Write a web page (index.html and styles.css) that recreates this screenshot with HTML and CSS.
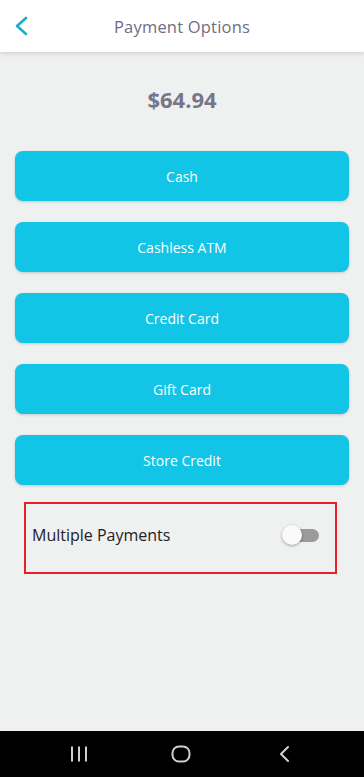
FILE: index.html
```html
<!DOCTYPE html>
<html>
<head>
<meta charset="utf-8">
<link rel="stylesheet" href="styles.css">
</head>
<body>
<div class="screen">
  <header class="topbar">
    <span class="back">
      <svg width="14" height="20" viewBox="0 0 14 20"><path d="M12 2 L3 10 L12 18" fill="none" stroke="#1aafc9" stroke-width="2.6" stroke-linecap="round" stroke-linejoin="round"/></svg>
    </span>
    <h1 class="title">Payment Options</h1>
  </header>
  <main class="content">
    <div class="amount">$64.94</div>
    <div class="options">
      <button class="opt">Cash</button>
      <button class="opt">Cashless ATM</button>
      <button class="opt">Credit Card</button>
      <button class="opt">Gift Card</button>
      <button class="opt">Store Credit</button>
    </div>
    <div class="multi">
      <span class="multi-label">Multiple Payments</span>
      <span class="toggle"><span class="track"></span><span class="thumb"></span></span>
    </div>
  </main>
  <nav class="navbar">
    <svg width="18" height="16" viewBox="0 0 18 16"><g fill="#d0d0d0"><rect x="1" y="0.5" width="2" height="15"/><rect x="8" y="0.5" width="2" height="15"/><rect x="15" y="0.5" width="2" height="15"/></g></svg>
    <svg width="20" height="18" viewBox="0 0 20 18"><rect x="1.5" y="1.5" width="17" height="15" rx="6.5" fill="none" stroke="#d0d0d0" stroke-width="2"/></svg>
    <svg width="12" height="16" viewBox="0 0 12 16"><path d="M9 1 L2 8 L9 15" fill="none" stroke="#d0d0d0" stroke-width="2" stroke-linecap="round" stroke-linejoin="round"/></svg>
  </nav>
</div>
</body>
</html>
```
FILE: styles.css
```css
* { box-sizing: border-box; }
html, body { margin: 0; padding: 0; }
body {
  width: 364px;
  height: 777px;
  background: #eff0f0;
  font-family: "Open Sans", "Noto Sans", sans-serif;
  overflow: hidden;
}
.screen {
  display: flex;
  flex-direction: column;
  height: 777px;
}
.topbar {
  position: relative;
  height: 52px;
  background: #ffffff;
  box-shadow: 0 2px 4px rgba(0,0,0,0.12);
  display: flex;
  align-items: center;
  justify-content: center;
  flex: none;
  z-index: 1;
}
.back {
  position: absolute;
  left: 14px;
  top: 16px;
  display: flex;
}
.title {
  margin: 0;
  font-size: 16.5px;
  font-weight: 400;
  color: #6e6d82;
  letter-spacing: 0.2px;
}
.content {
  flex: 1;
  display: flex;
  flex-direction: column;
  padding: 0 15px;
}
.amount {
  margin-top: 33px;
  height: 28px;
  text-align: center;
  font-size: 22px;
  font-weight: 700;
  color: #76758a;
  line-height: 28px;
}
.options {
  margin-top: 38px;
  display: flex;
  flex-direction: column;
  gap: 21px;
}
.opt {
  height: 50px;
  border: none;
  border-radius: 8px;
  background: #12c4e5;
  color: #ffffff;
  font-family: inherit;
  font-size: 14px;
  box-shadow: 0 1px 3px rgba(0,0,0,0.18);
  padding: 0;
}
.multi {
  margin: 17px 12px 0 9px;
  height: 72px;
  border: 2px solid #e8202a;
  display: flex;
  align-items: center;
  justify-content: space-between;
  padding: 0 16px 0 6px;
}
.multi-label {
  font-size: 16px;
  color: #222222;
  margin-top: -6px;
}
.toggle {
  position: relative;
  width: 37px;
  height: 20px;
  margin-top: -6px;
}
.track {
  position: absolute;
  left: 4px;
  top: 4px;
  width: 33px;
  height: 13px;
  border-radius: 7px;
  background: #9b9b9b;
}
.thumb {
  position: absolute;
  left: 0;
  top: 0;
  width: 20px;
  height: 20px;
  border-radius: 50%;
  background: #fafafa;
  box-shadow: 0 1px 3px rgba(0,0,0,0.35);
}
.navbar {
  height: 46px;
  background: #000000;
  flex: none;
  display: flex;
  align-items: center;
  padding: 0 0 0 70px;
}
.navbar svg:nth-child(1) { margin-right: 83px; }
.navbar svg:nth-child(2) { margin-right: 88px; }
```
